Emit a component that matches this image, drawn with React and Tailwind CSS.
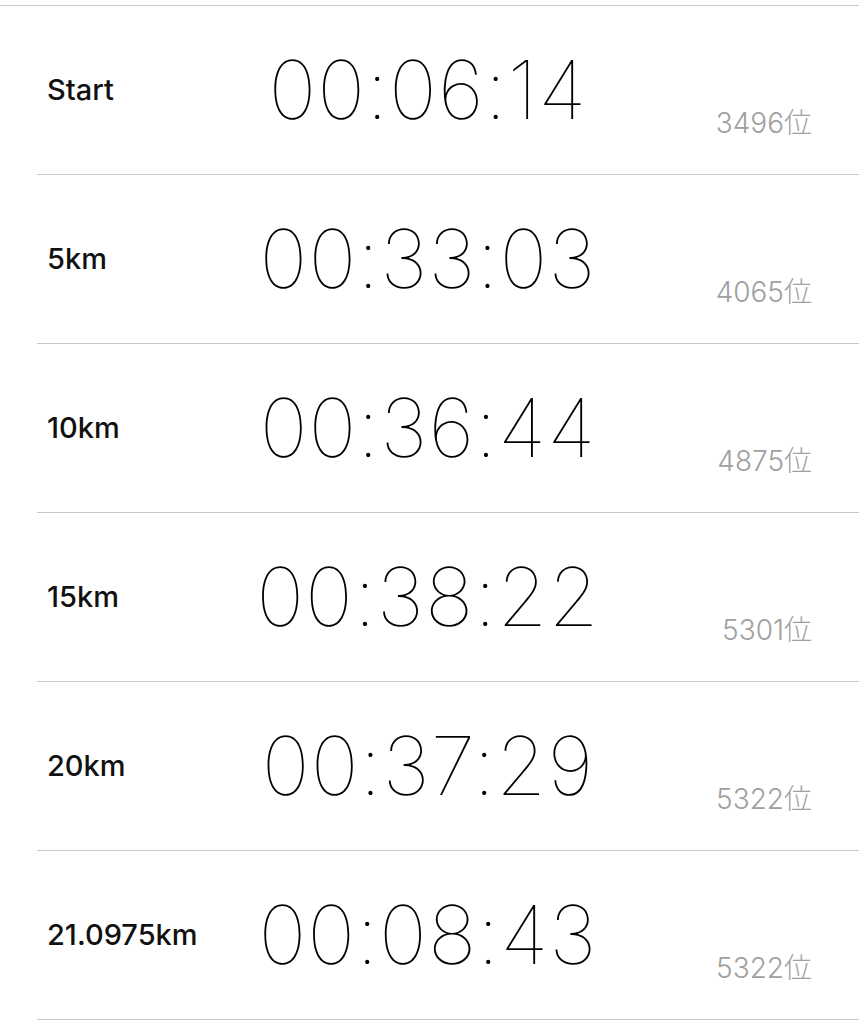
import React from 'react';

const splits = [
  { label: 'Start', time: '00:06:14', rank: '3496位' },
  { label: '5km', time: '00:33:03', rank: '4065位' },
  { label: '10km', time: '00:36:44', rank: '4875位' },
  { label: '15km', time: '00:38:22', rank: '5301位' },
  { label: '20km', time: '00:37:29', rank: '5322位' },
  { label: '21.0975km', time: '00:08:43', rank: '5322位' },
];

const SplitRow = ({ label, time, rank }) => (
  <div className="ml-[37px] h-[169px] border-b border-[#c8c8c8] grid grid-cols-[190px_402px_1fr] items-center">
    <div className="pl-[10px] text-[29px] font-medium text-[#111]">{label}</div>
    <div className="text-center text-[81px] font-thin text-black leading-none tracking-[1px]">{time}</div>
    <div className="mt-[66px] pr-[47px] text-right text-[28px] font-light text-[#a0a0a0]">{rank}</div>
  </div>
);

export default function App() {
  return (
    <div className="w-[859px] h-[1024px] bg-white overflow-hidden font-['Inter','Noto_Sans_CJK_JP',sans-serif]">
      <div className="mt-[5px] h-px bg-[#c8c8c8]" />
      {splits.map((s) => (
        <SplitRow key={s.label} {...s} />
      ))}
    </div>
  );
}
